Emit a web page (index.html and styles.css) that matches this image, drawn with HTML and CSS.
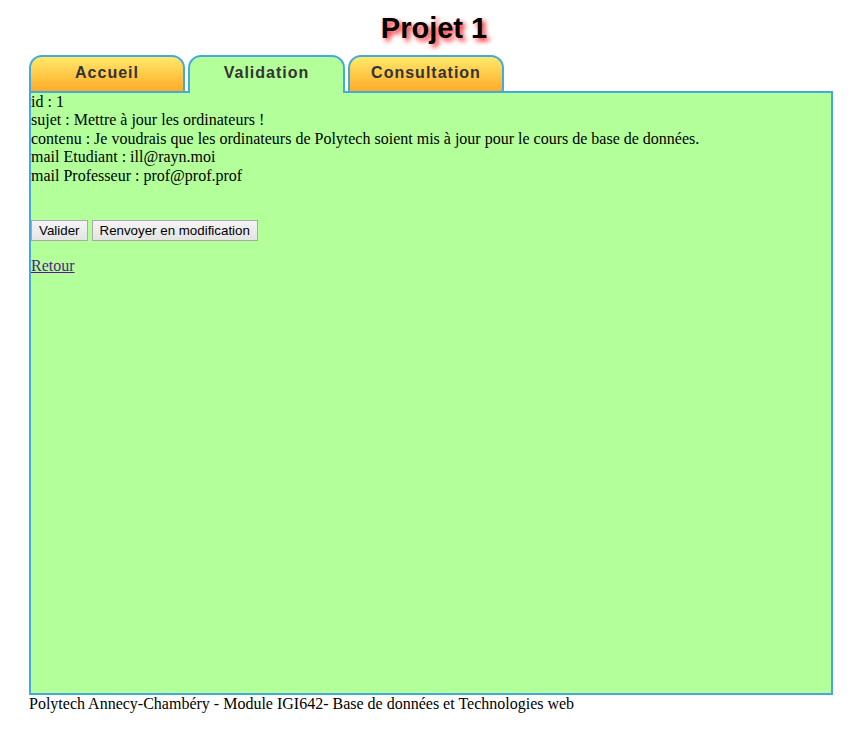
FILE: index.html
```html
<!DOCTYPE html>
<html lang="fr">
<head>
<meta charset="utf-8">
<title>Projet 1</title>
<link rel="stylesheet" href="styles.css">
</head>
<body>
<div class="page">
  <h1 class="title">Projet 1</h1>
  <nav class="tabs">
    <a class="tab" href="#">Accueil</a>
    <a class="tab tab-active" href="#">Validation</a>
    <a class="tab" href="#">Consultation</a>
  </nav>
  <main class="content">
    <div class="details">
      id : 1<br>
      sujet : Mettre à jour les ordinateurs !<br>
      contenu : Je voudrais que les ordinateurs de Polytech soient mis à jour pour le cours de base de données.<br>
      mail Etudiant : ill@rayn.moi<br>
      mail Professeur : prof@prof.prof
    </div>
    <form class="actions">
      <button type="button" class="btn">Valider</button>
      <button type="button" class="btn">Renvoyer en modification</button>
    </form>
    <p class="back"><a class="back-link" href="#">Retour</a></p>
  </main>
  <footer class="footer">Polytech Annecy-Chambéry - Module IGI642- Base de données et Technologies web</footer>
</div>
</body>
</html>
```

FILE: styles.css
```css
html, body {
  margin: 0;
  padding: 0;
  background: #ffffff;
}

body {
  font-family: "Liberation Serif", "Times New Roman", serif;
  font-size: 16px;
  color: #000;
}

.page {
  padding-left: 29px;
  width: 804px;
}

.title {
  margin: 0;
  padding: 12px 0 10px 6px;
  text-align: center;
  font-family: "Liberation Sans", Arial, sans-serif;
  font-weight: bold;
  font-size: 29px;
  line-height: 33px;
  color: #000;
  text-shadow: 3px 3px 5px #ff1a1a;
}

.tabs {
  display: flex;
  gap: 3px;
  align-items: flex-end;
  position: relative;
  z-index: 1;
}

.tab {
  box-sizing: border-box;
  width: 156px;
  height: 36px;
  padding-top: 7px;
  border: 2px solid #44aadd;
  border-bottom: none;
  border-radius: 13px 13px 0 0;
  background: linear-gradient(#ffe96b, #ffab27);
  color: #333;
  text-align: center;
  text-decoration: none;
  font-family: "Liberation Sans", Arial, sans-serif;
  font-weight: bold;
  font-size: 16px;
  letter-spacing: 1px;
  line-height: 18px;
}

.tab-active {
  width: 157px;
  height: 38px;
  margin-bottom: -2px;
  background: #b3ff99;
}

.content {
  box-sizing: border-box;
  height: 604px;
  border: 2px solid #44aadd;
  background: #b3ff99;
}

.details {
  line-height: 18.4px;
}

.actions {
  display: flex;
  gap: 4px;
  margin: 35px 0 0 0;
}

.btn {
  box-sizing: border-box;
  height: 21px;
  padding: 0 7px;
  border: 1px solid #a9a9a9;
  border-radius: 0;
  background: linear-gradient(#f4f4f4, #e4e4e4);
  color: #000;
  font-family: "Liberation Sans", Arial, sans-serif;
  font-size: 13.33px;
}

.back {
  margin: 16px 0 0 0;
  line-height: 18.4px;
}

.back-link {
  color: #551a8b;
}

.footer {
  line-height: 18.4px;
}
```
